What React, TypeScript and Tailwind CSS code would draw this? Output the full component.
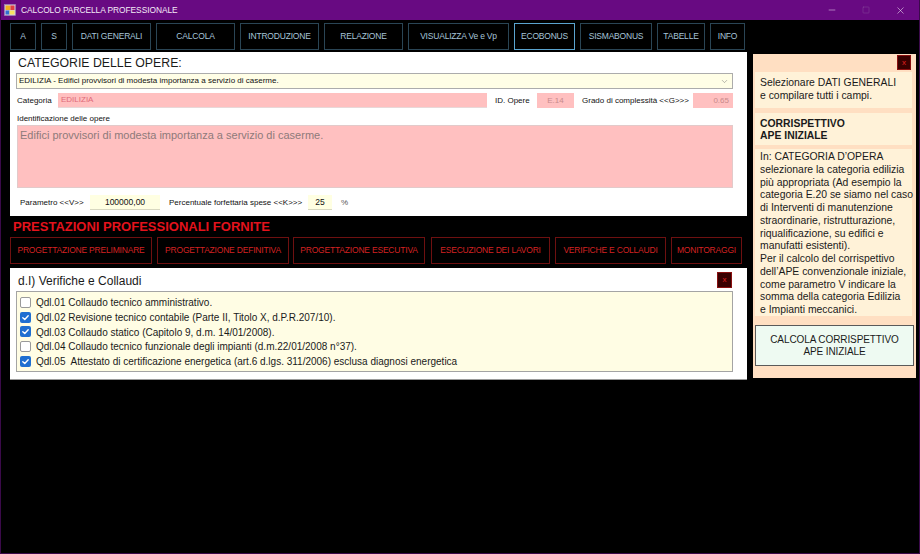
import React from "react";
import { ChevronDown, Minus, Square, X } from "lucide-react";

const topButtons = [
  { label: "A", w: "w-[26px]", active: false },
  { label: "S", w: "w-[26px]", active: false },
  { label: "DATI GENERALI", w: "w-[79px]", active: false },
  { label: "CALCOLA", w: "w-[79px]", active: false },
  { label: "INTRODUZIONE", w: "w-[79px]", active: false },
  { label: "RELAZIONE", w: "w-[79px]", active: false },
  { label: "VISUALIZZA Ve e Vp", w: "w-[101px]", active: false },
  { label: "ECOBONUS", w: "w-[61px]", active: true },
  { label: "SISMABONUS", w: "w-[72px]", active: false },
  { label: "TABELLE", w: "w-[48px]", active: false },
  { label: "INFO", w: "w-[35px]", active: false },
];

const redButtons = [
  { label: "PROGETTAZIONE PRELIMINARE", w: "w-[142px]", ml: "ml-0" },
  { label: "PROGETTAZIONE DEFINITIVA", w: "w-[132px]", ml: "ml-[5px]" },
  { label: "PROGETTAZIONE ESECUTIVA", w: "w-[132px]", ml: "ml-[4px]" },
  { label: "ESECUZIONE DEI LAVORI", w: "w-[119px]", ml: "ml-[6px]" },
  { label: "VERIFICHE E COLLAUDI", w: "w-[111px]", ml: "ml-[5px]" },
  { label: "MONITORAGGI", w: "w-[71px]", ml: "ml-[5px]" },
];

const items = [
  { text: "Qdl.01 Collaudo tecnico amministrativo.", checked: false },
  { text: "Qdl.02 Revisione tecnico contabile (Parte II, Titolo X, d.P.R.207/10).", checked: true },
  { text: "Qdl.03 Collaudo statico (Capitolo 9, d.m. 14/01/2008).", checked: true },
  { text: "Qdl.04 Collaudo tecnico funzionale degli impianti (d.m.22/01/2008 n°37).", checked: false },
  { text: "Qdl.05  Attestato di certificazione energetica (art.6 d.lgs. 311/2006) esclusa diagnosi energetica", checked: true },
];

const infoLines = [
  "In: CATEGORIA D\u2019OPERA",
  "selezionare la categoria edilizia",
  "più appropriata (Ad esempio la",
  "categoria E.20 se siamo nel caso",
  "di Interventi di manutenzione",
  "straordinarie, ristrutturazione,",
  "riqualificazione, su edifici e",
  "manufatti esistenti).",
  "Per il calcolo del corrispettivo",
  "dell\u2019APE convenzionale iniziale,",
  "come parametro V indicare la",
  "somma della categoria Edilizia",
  "e Impianti meccanici.",
];

function Checkbox({ checked }: { checked: boolean }) {
  if (checked) {
    return (
      <div className="w-[11px] h-[11px] rounded-[2px] bg-[#1f6fd1] flex items-center justify-center shrink-0">
        <svg width="9" height="9" viewBox="0 0 10 10">
          <polyline points="2,5.2 4.2,7.3 8,3" fill="none" stroke="#ffffff" strokeWidth="1.5" strokeLinecap="round" strokeLinejoin="round" />
        </svg>
      </div>
    );
  }
  return <div className="w-[11px] h-[11px] rounded-[2px] bg-white border border-[#9a9a9a] shrink-0" />;
}

function CloseBtn({ cls }: { cls: string }) {
  return (
    <div className={`${cls} bg-[#3a0000] border border-[#8a1010] flex items-center justify-center text-[#e02020] text-[8px] leading-none`}>
      x
    </div>
  );
}

function AppIcon() {
  return (
    <svg width="12" height="12" viewBox="0 0 12 12">
      <rect x="0.5" y="0.5" width="11" height="11" fill="#d8c8e8" stroke="#9a8ab0" strokeWidth="0.6" />
      <rect x="1.5" y="1.5" width="5" height="4.5" fill="#f0b020" />
      <rect x="6.5" y="1.5" width="4" height="4.5" fill="#e04040" />
      <rect x="1.5" y="6.5" width="4" height="4" fill="#3070d0" />
      <rect x="5.5" y="6.5" width="5" height="4" fill="#f6e060" />
    </svg>
  );
}

export default function App() {
  return (
    <div className="w-[920px] h-[554px] bg-black flex flex-col overflow-hidden border-x border-b border-[#3b0a4a] font-['Liberation_Sans',Arial,sans-serif]">
      {/* title bar */}
      <div className="h-[20px] bg-[#680a82] flex items-center shrink-0 text-white">
        <div className="ml-[3px] flex items-center">
          <AppIcon />
        </div>
        <div className="ml-[5px] text-[8.4px] tracking-[-0.05px] text-[#f3eaf6]">CALCOLO PARCELLA PROFESSIONALE</div>
        <div className="ml-auto flex items-center h-full">
          <div className="w-[34px] flex justify-center">
            <Minus size={10} strokeWidth={1.2} color="#f0e6f4" />
          </div>
          <div className="w-[34px] flex justify-center">
            <Square size={8} strokeWidth={1} color="#9a6aaa" />
          </div>
          <div className="w-[34px] mr-[2px] flex justify-center">
            <X size={11} strokeWidth={1.2} color="#f0e6f4" />
          </div>
        </div>
      </div>

      {/* body */}
      <div className="flex flex-1 pl-[9px]">
        {/* left column */}
        <div className="w-[737px] flex flex-col pt-[3px]">
          <div className="flex h-[27px] gap-[5px]">
            {topButtons.map((b) => (
              <div
                key={b.label}
                className={`${b.w} h-full flex items-center justify-center border ${b.active ? "border-[#5aa4cf]" : "border-[#2a4555]"} text-[#a6c4d8] text-[8.5px] tracking-[-0.2px] whitespace-nowrap`}
              >
                {b.label}
              </div>
            ))}
          </div>

          {/* categorie panel */}
          <div className="mt-[2px] h-[164px] bg-white flex flex-col">
            <div className="h-[21px] pl-[8px] pt-[4px] text-[12.3px] leading-[15px] text-[#1a1a1a]">CATEGORIE DELLE OPERE:</div>
            <div className="ml-[6px] mr-[14px] h-[16px] border border-[#acacac] bg-[#fffee6] flex items-center pl-[2px] text-[8px] text-[#111]">
              <span>EDILIZIA - Edifici provvisori di modesta importanza a servizio di caserme.</span>
              <ChevronDown size={9} strokeWidth={1.3} color="#707070" className="ml-auto mr-[3px]" />
            </div>
            <div className="mt-[4px] h-[15px] flex items-center text-[8px] text-[#111]">
              <div className="w-[48px] pl-[7px]">Categoria</div>
              <div className="w-[429px] h-full bg-[#ffc0c0] border-b border-[#e8d8d8] flex items-center pl-[3px] text-[#e06a78]">EDILIZIA</div>
              <div className="ml-[8px] w-[42px]">ID. Opere</div>
              <div className="w-[37px] h-full bg-[#ffc0c0] flex items-center justify-center text-[#c88a8a]">E.14</div>
              <div className="ml-[8px] w-[111px] whitespace-nowrap">Grado di complessità &lt;&lt;G&gt;&gt;&gt;</div>
              <div className="w-[40px] h-full bg-[#ffc0c0] flex items-center justify-end pr-[4px] text-[#c88a8a]">0.65</div>
            </div>
            <div className="mt-[5px] h-[12px] pl-[7px] text-[8px] leading-[12px] text-[#111]">Identificazione delle opere</div>
            <div className="ml-[7px] mr-[14px] h-[63px] bg-[#ffc0c0] border border-[#e2caca] pl-[2px] pt-[1px] text-[11px] text-[#8e7a7a]">
              Edifici provvisori di modesta importanza a servizio di caserme.
            </div>
            <div className="mt-[7px] h-[15px] flex items-center text-[8px] text-[#111]">
              <div className="w-[80px] pl-[10px]">Parametro &lt;&lt;V&gt;&gt;</div>
              <div className="w-[70px] h-full bg-[#ffffe2] border-b border-[#d8d8c0] flex items-center justify-center text-[8.5px]">100000,00</div>
              <div className="ml-[9px] w-[139px] whitespace-nowrap">Percentuale forfettaria spese &lt;&lt;K&gt;&gt;&gt;</div>
              <div className="w-[24px] h-full bg-[#ffffe2] border-b border-[#d8d8c0] flex items-center justify-center text-[8.5px]">25</div>
              <div className="ml-[9px] text-[#555]">%</div>
            </div>
          </div>

          {/* prestazioni */}
          <div className="h-[21px] pl-[3px] pt-[3px] text-[13px] leading-[15px] font-bold text-[#e3121c]">PRESTAZIONI PROFESSIONALI FORNITE</div>
          <div className="flex h-[27px]">
            {redButtons.map((b) => (
              <div
                key={b.label}
                className={`${b.w} ${b.ml} h-full flex items-center justify-center border border-[#6e1010] text-[#d42222] text-[8.5px] tracking-[-0.2px] whitespace-nowrap`}
              >
                {b.label}
              </div>
            ))}
          </div>

          {/* verifiche panel */}
          <div className="mt-[4px] h-[112px] bg-white flex flex-col border-b border-[#9a9a9a]">
            <div className="h-[23px] flex items-start">
              <div className="pl-[8px] pt-[6px] text-[12px] leading-[14px] text-[#1a1a1a]">d.I) Verifiche e Collaudi</div>
              <CloseBtn cls="ml-auto mr-[15px] mt-[4px] w-[15px] h-[16px]" />
            </div>
            <div className="ml-[6px] mr-[14px] h-[81px] bg-[#fffde4] border border-[#a4a4a4] pt-[3px] flex flex-col">
              {items.map((it) => (
                <div key={it.text} className="h-[14.8px] flex items-center pl-[3px] gap-[5px] text-[10px] text-[#1a1a1a] whitespace-pre">
                  <Checkbox checked={it.checked} />
                  <span>{it.text}</span>
                </div>
              ))}
            </div>
          </div>
        </div>

        {/* right column */}
        <div className="ml-[6px] mt-[34px] w-[163px] h-[324px] bg-[#ffdfc2] flex flex-col pl-[2px] pr-[4px]">
          <div className="h-[18px] flex justify-end">
            <CloseBtn cls="mt-[1px] mr-[1px] w-[14px] h-[15px]" />
          </div>
          <div className="bg-[#fff2d8] h-[36px] pl-[5px] pt-[5px] text-[10.4px] leading-[12.8px] text-[#1a1a1a]">
            Selezionare DATI GENERALI
            <br />e compilare tutti i campi.
          </div>
          <div className="mt-[5px] bg-[#fff2d8] h-[32px] pl-[5px] pt-[5px] text-[10.4px] leading-[11.5px] font-bold text-[#1a1a1a]">
            CORRISPETTIVO
            <br />
            APE INIZIALE
          </div>
          <div className="mt-[4px] bg-[#fff2d8] h-[167px] pl-[5px] pt-[2px] text-[10.4px] leading-[12.75px] text-[#1a1a1a] whitespace-nowrap">
            {infoLines.map((l) => (
              <div key={l}>{l}</div>
            ))}
          </div>
          <div className="mt-[9px] h-[41px] mr-[-2px] bg-[#eefaf2] border border-[#5a5a5a] flex flex-col items-center justify-center text-[10px] leading-[12px] text-[#1a1a1a] tracking-[-0.1px]">
            <div>CALCOLA CORRISPETTIVO</div>
            <div>APE INIZIALE</div>
          </div>
        </div>
      </div>
    </div>
  );
}
